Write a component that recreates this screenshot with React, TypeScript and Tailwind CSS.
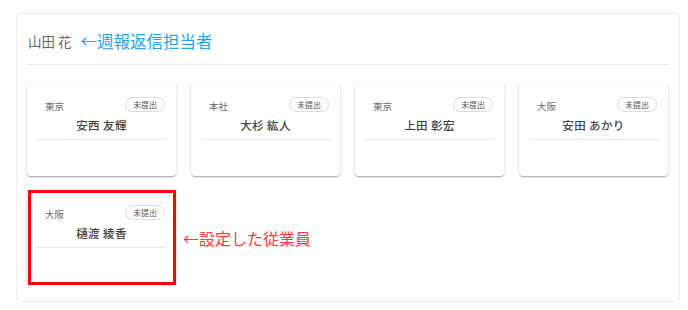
import React from "react";

type Staff = { place: string; name: string; marked?: boolean };

const staff: Staff[] = [
  { place: "東京", name: "安西 友輝" },
  { place: "本社", name: "大杉 紘人" },
  { place: "東京", name: "上田 彰宏" },
  { place: "大阪", name: "安田 あかり" },
  { place: "大阪", name: "樋渡 綾香", marked: true },
];

const font = { fontFamily: '"Noto Sans CJK JP", "Noto Sans", sans-serif' };

function StaffCard({ place, name, marked }: Staff) {
  return (
    <div className="relative h-[93px] rounded-[4px] bg-white shadow-[0_1px_3px_rgba(0,0,0,0.18),0_1px_1px_rgba(0,0,0,0.12),0_2px_1px_-1px_rgba(0,0,0,0.1)]">
      <div className="flex items-start justify-between pl-[18px] pr-[11px] pt-[14px]">
        <span className="mt-[2px] text-[9.5px] leading-[14px] text-[#666]">{place}</span>
        <span className="flex h-[15px] w-[40px] items-center justify-center rounded-full border border-[#dcdcdc] text-[8px] text-[#555]">
          未提出
        </span>
      </div>
      <div className="mt-[3px] text-center text-[11.5px] font-medium leading-[18px] tracking-[0.4px] text-[#444]">
        {name}
      </div>
      <div className="mx-[10px] mt-[5px] h-px bg-[#e8e8e8]" />
      {marked && (
        <div className="pointer-events-none absolute -top-[1px] -bottom-[1px] left-[1px] right-0 border-[3px] border-[#ff0000]" />
      )}
    </div>
  );
}

export default function App() {
  return (
    <div className="h-[310px] w-[688px] bg-white pl-[16px] pt-[13px]" style={font}>
      <div className="h-[289px] w-[664px] rounded-[4px] border border-[#ebebeb] px-[10px]">
        <div className="flex h-[50px] items-end pb-[12px] pl-[1px]">
          <span className="text-[13.5px] leading-[22px] text-[#666]">山田 花</span>
          <span className="ml-[9px] text-[16.5px] leading-[22px] text-[#26a3ea]">←週報返信担当者</span>
        </div>
        <div className="h-px w-[641px] bg-[#ececec]" />
        <div className="mt-[18px] grid w-[641px] grid-cols-4 gap-x-[15px] gap-y-[15px]">
          {staff.map((s) => (
            <StaffCard key={s.name} {...s} />
          ))}
          <div className="-ml-[8px] flex items-center">
            <span className="text-[16px] text-[#ff3b3b]">←設定した従業員</span>
          </div>
        </div>
      </div>
    </div>
  );
}
